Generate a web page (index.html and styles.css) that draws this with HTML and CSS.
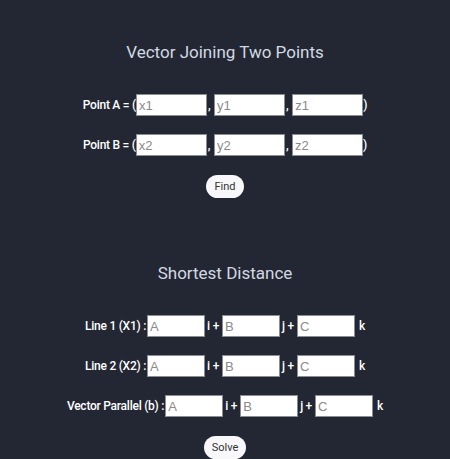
FILE: index.html
```html
<!DOCTYPE html>
<html>
<head>
<meta charset="utf-8">
<link rel="stylesheet" href="styles.css">
</head>
<body>
<main class="page">
  <section class="card card-points">
    <h2 class="title">Vector Joining Two Points</h2>
    <div class="row"><span class="lbl">Point A = (</span><input class="box w70" placeholder="x1"><span class="lbl sep">, </span><input class="box w70" placeholder="y1"><span class="lbl sep">, </span><input class="box w70" placeholder="z1"><span class="lbl">)</span></div>
    <div class="row"><span class="lbl">Point B = (</span><input class="box w70" placeholder="x2"><span class="lbl sep">, </span><input class="box w70" placeholder="y2"><span class="lbl sep">, </span><input class="box w70" placeholder="z2"><span class="lbl">)</span></div>
    <button class="btn">Find</button>
  </section>
  <section class="card card-dist">
    <h2 class="title">Shortest Distance</h2>
    <div class="row"><span class="lbl pre">Line 1 (X1) :</span><input class="box w58" placeholder="A"><span class="lbl op">i +</span><input class="box w58" placeholder="B"><span class="lbl op">j +</span><input class="box w58" placeholder="C"><span class="lbl k">k</span></div>
    <div class="row"><span class="lbl pre">Line 2 (X2) :</span><input class="box w58" placeholder="A"><span class="lbl op">i +</span><input class="box w58" placeholder="B"><span class="lbl op">j +</span><input class="box w58" placeholder="C"><span class="lbl k">k</span></div>
    <div class="row"><span class="lbl pre">Vector Parallel (b) :</span><input class="box w58" placeholder="A"><span class="lbl op">i +</span><input class="box w58" placeholder="B"><span class="lbl op">j +</span><input class="box w58" placeholder="C"><span class="lbl k">k</span></div>
    <button class="btn">Solve</button>
  </section>
</main>
</body>
</html>
```
FILE: styles.css
```css
html, body {
  margin: 0;
  padding: 0;
  background: #222733;
}
.page {
  display: flex;
  flex-direction: column;
  align-items: center;
  font-family: Roboto, "Liberation Sans", sans-serif;
}
.card {
  display: flex;
  flex-direction: column;
  align-items: center;
}
.card-points {
  padding-top: 40px;
}
.card-dist {
  padding-top: 63px;
}
.title {
  margin: 0 0 30px 0;
  font-size: 17px;
  line-height: 24px;
  font-weight: 400;
  color: #d3d9e2;
}
.row {
  display: flex;
  align-items: center;
  justify-content: center;
  height: 22px;
  margin-bottom: 18px;
}
.lbl {
  color: #ffffff;
  font-size: 12px;
  font-weight: 500;
  letter-spacing: -0.25px;
  white-space: pre;
}
.sep {
  padding: 0 1px 0 1px;
}
.pre {
  margin-right: 1px;
}
.op {
  padding: 0 3px 0 2px;
}
.k {
  margin-left: 4px;
}
.box {
  box-sizing: border-box;
  height: 22px;
  margin: 0;
  padding: 0 2px;
  border: 1px solid #8a8d93;
  background: #ffffff;
  font-family: "Liberation Sans", sans-serif;
  font-size: 13px;
  color: #222;
  outline: none;
}
.box::placeholder {
  color: #8a8a8a;
}
.w70 { width: 71px; }
.w58 { width: 58px; }
.btn {
  margin: 1px 0 0 0;
  padding: 0 8px;
  height: 23px;
  border: none;
  border-radius: 12px;
  background: #f8f8fa;
  color: #333;
  font-family: Roboto, "Liberation Sans", sans-serif;
  font-size: 11px;
}
```
